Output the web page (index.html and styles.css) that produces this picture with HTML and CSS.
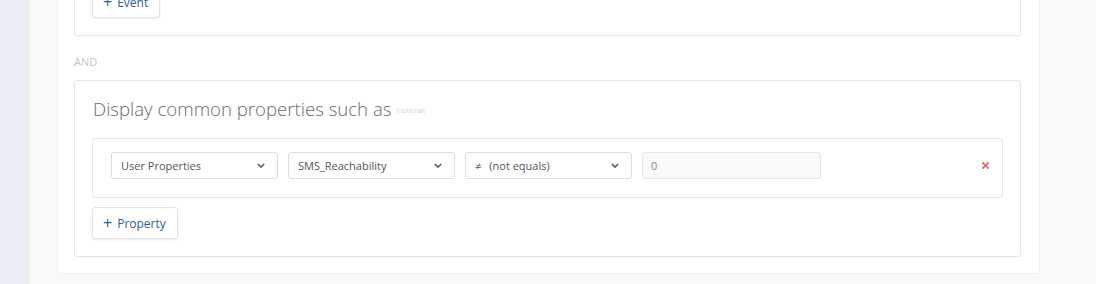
FILE: index.html
```html
<!DOCTYPE html>
<html lang="en">
<head>
  <meta charset="UTF-8">
  <title>Segment filter</title>
  <link rel="stylesheet" href="styles.css">
</head>
<body>
  <div class="layout">
    <aside class="sidebar"></aside>
    <main class="main">
      <div class="panel">
        <div class="box event-box">
          <button class="add-btn"><span class="plus">+</span> Event</button>
        </div>

        <div class="joiner">AND</div>

        <div class="box">
          <h2 class="box-title">Display common properties such as <small>(optional)</small></h2>
          <div class="filter-row">
            <div class="select w-std"><span>User Properties</span><svg class="chev" viewBox="0 0 10 6"><path d="M1 1l4 4 4-4"/></svg></div>
            <div class="select w-std"><span>SMS_Reachability</span><svg class="chev" viewBox="0 0 10 6"><path d="M1 1l4 4 4-4"/></svg></div>
            <div class="select w-std"><span><span class="op">&ne;</span>(not equals)</span><svg class="chev" viewBox="0 0 10 6"><path d="M1 1l4 4 4-4"/></svg></div>
            <div class="value-input">0</div>
            <button class="remove" aria-label="Remove">
              <svg viewBox="0 0 10 10"><path d="M1.5 1.5l7 7M8.5 1.5l-7 7"/></svg>
            </button>
          </div>
          <button class="add-btn"><span class="plus">+</span> Property</button>
        </div>
      </div>
    </main>
  </div>
</body>
</html>
```

FILE: styles.css
```css
/* General */
body {
  margin: 0;
  font-family: 'Open Sans', 'Liberation Sans', sans-serif;
  color: #555;
  background: #f9f9f9;
  overflow: hidden;
}

.layout {
  display: flex;
  height: 284px;
}

.sidebar {
  width: 28px;
  flex: none;
  background: #e9eef5;
  border-right: 2px solid #f0f0f0;
}

.main {
  flex: 1;
  padding: 0 56px 0 27px;
}

/* Panel */
.panel {
  margin-top: -49px;
  padding: 17px 18px 16px 16px;
  background: #fff;
  border: 1px solid #f0f0f0;
  border-top: none;
  border-radius: 0 0 3px 3px;
}

.box {
  border: 1px solid #e6e6e6;
  border-radius: 3px;
  padding: 0 17px 17px 17px;
  box-shadow: 0 1px 1px rgba(0, 0, 0, 0.03);
}

.event-box {
  padding-top: 17px;
}

.box-title {
  margin: 0;
  padding: 15px 0 14px 1px;
  font-size: 18.6px;
  font-weight: 300;
  line-height: 26px;
  color: #6a6a6a;
}

.box-title small {
  font-size: 7px;
  color: #bbb;
  vertical-align: middle;
}

.joiner {
  padding: 19px 0 11px;
  font-size: 11px;
  line-height: 14px;
  color: #c6c6c6;
}

/* Buttons */
.add-btn {
  display: inline-flex;
  align-items: center;
  height: 32px;
  padding: 0 11px 0 10px;
  background: #fff;
  border: 1px solid #e3e3e3;
  border-radius: 3px;
  box-shadow: 0 1px 2px rgba(0, 0, 0, 0.08);
  font-family: inherit;
  font-size: 12px;
  color: #2d5d9a;
  cursor: pointer;
}

.add-btn .plus {
  font-size: 16px;
  margin-right: 5px;
  line-height: 1;
}

/* Filter row */
.filter-row {
  display: flex;
  align-items: center;
  gap: 9px;
  margin-bottom: 9px;
  padding: 13px 11px 18px 18px;
  border: 1px solid #e8e8e8;
  border-radius: 3px;
}

.select {
  display: flex;
  align-items: center;
  justify-content: space-between;
  height: 25px;
  padding: 0 12px 0 9px;
  border: 1px solid #dcdcdc;
  border-radius: 3px;
  background: #fff;
  font-size: 11px;
  color: #555;
}

.w-std {
  width: 144px;
}

.select + .select {
  margin-left: 1px;
}

.op {
  margin-right: 8px;
}

.chev {
  width: 8px;
  height: 5px;
  fill: none;
  stroke: #555;
  stroke-width: 1.8;
}

.value-input {
  width: 169px;
  height: 25px;
  margin-left: 1px;
  padding: 0 0 0 8px;
  border: 1px solid #e6e6e6;
  border-radius: 3px;
  background: #fafafa;
  font-size: 11px;
  line-height: 25px;
  color: #888;
}

.remove {
  margin-left: auto;
  padding: 0;
  width: 10px;
  height: 10px;
  border: none;
  background: none;
  cursor: pointer;
}

.remove svg {
  display: block;
  width: 9px;
  height: 9px;
  stroke: #e06a6a;
  stroke-width: 2;
}
```
